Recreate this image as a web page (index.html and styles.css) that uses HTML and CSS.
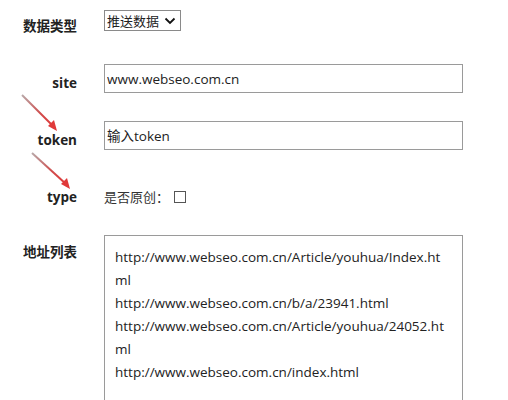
FILE: index.html
```html
<!DOCTYPE html>
<html lang="zh-CN">
<head>
<meta charset="utf-8">
<link rel="stylesheet" href="styles.css">
</head>
<body>
<form class="form">
  <div class="row row-type">
    <label class="label">数据类型</label>
    <div class="field">
      <span class="select-wrap">
        <select class="select"><option>推送数据</option></select>
        <svg class="chev" width="12" height="8" viewBox="0 0 12 8"><path d="M1.5 1.5 L6 6 L10.5 1.5" fill="none" stroke="#111" stroke-width="1.8"/></svg>
      </span>
    </div>
  </div>
  <div class="row row-site">
    <label class="label">site</label>
    <div class="field"><input class="text" type="text" value="www.webseo.com.cn"></div>
  </div>
  <div class="row row-token">
    <label class="label">token</label>
    <div class="field"><input class="text" type="text" placeholder="输入token"></div>
  </div>
  <div class="row row-check">
    <label class="label">type</label>
    <div class="field check-field"><span>是否原创：</span><input class="check" type="checkbox"></div>
  </div>
  <div class="row row-list">
    <label class="label">地址列表</label>
    <div class="field"><textarea class="area">http://www.webseo.com.cn/Article/youhua/Index.html
http://www.webseo.com.cn/b/a/23941.html
http://www.webseo.com.cn/Article/youhua/24052.html
http://www.webseo.com.cn/index.html</textarea></div>
  </div>
  <svg class="arrows" width="90" height="200" viewBox="0 0 90 200">
    <defs>
      <linearGradient id="g1" x1="0" y1="0" x2="1" y2="1">
        <stop offset="0" stop-color="#b8a8a8"/>
        <stop offset="0.6" stop-color="#d04a4a"/>
        <stop offset="1" stop-color="#e03a3a"/>
      </linearGradient>
    </defs>
    <line x1="22" y1="95" x2="53" y2="126" stroke="url(#g1)" stroke-width="2"/>
    <polygon points="57,131 48,126 54,120" fill="#e03a3a"/>
    <line x1="32" y1="153" x2="66" y2="184" stroke="url(#g1)" stroke-width="2"/>
    <polygon points="70,189 61,184 67,178" fill="#e03a3a"/>
  </svg>
</form>
</body>
</html>
```
FILE: styles.css
```css
html, body {
  margin: 0;
  padding: 0;
  background: #fff;
}
body {
  font-family: "Open Sans", "Noto Sans CJK SC", sans-serif;
  color: #222;
  overflow: hidden;
}
.form {
  position: relative;
  padding-top: 9px;
}
.row {
  display: grid;
  grid-template-columns: 77px 1fr;
  column-gap: 27px;
}
.label {
  text-align: right;
  font-weight: bold;
  font-size: 13.5px;
  color: #222;
  line-height: 18px;
}
.row-type .label { padding-top: 8px; }
.row-site { margin-top: 29px; }
.row-site .label { padding-top: 10px; }
.row-token { margin-top: 28px; }
.row-token .label { padding-top: 10px; }
.row-check { margin-top: 38px; }
.row-check .label { padding-top: 0; }
.row-list { margin-top: 29px; }
.row-list .label { padding-top: 8px; }

.select-wrap {
  display: inline-flex;
  align-items: center;
  border: 1px solid #8a8a8a;
  height: 19px;
  padding: 0 4px 0 2px;
  gap: 4px;
}
.select {
  appearance: none;
  border: none;
  background: transparent;
  font-family: "Noto Sans CJK SC", sans-serif;
  font-size: 13px;
  color: #222;
  padding: 0;
  margin: 0;
  outline: none;
}
.chev { display: block; }

.text {
  box-sizing: border-box;
  width: 359px;
  height: 29px;
  border: 1px solid #9a9a9a;
  padding: 0 2px;
  font-family: "Open Sans", "Noto Sans CJK SC", sans-serif;
  font-size: 13.5px;
  color: #222;
  margin: 0;
  display: block;
  outline: none;
}
.text::placeholder { color: #222; opacity: 1; }

.check-field {
  display: flex;
  align-items: center;
  font-family: "Noto Sans CJK SC", sans-serif;
  font-size: 13px;
  line-height: 18px;
  color: #333;
}
.check {
  appearance: none;
  width: 12px;
  height: 12px;
  border: 1px solid #555;
  margin: 0 0 0 5px;
  box-sizing: border-box;
}

.area {
  box-sizing: border-box;
  display: block;
  width: 359px;
  height: 200px;
  border: 1px solid #9a9a9a;
  padding: 10px 16px 10px 10px;
  font-family: "Open Sans", "Noto Sans CJK SC", sans-serif;
  font-size: 13.5px;
  line-height: 23px;
  color: #222;
  resize: none;
  margin: 0;
  overflow: hidden;
  outline: none;
}
.arrows {
  position: absolute;
  left: 0;
  top: 0;
  pointer-events: none;
}
```
